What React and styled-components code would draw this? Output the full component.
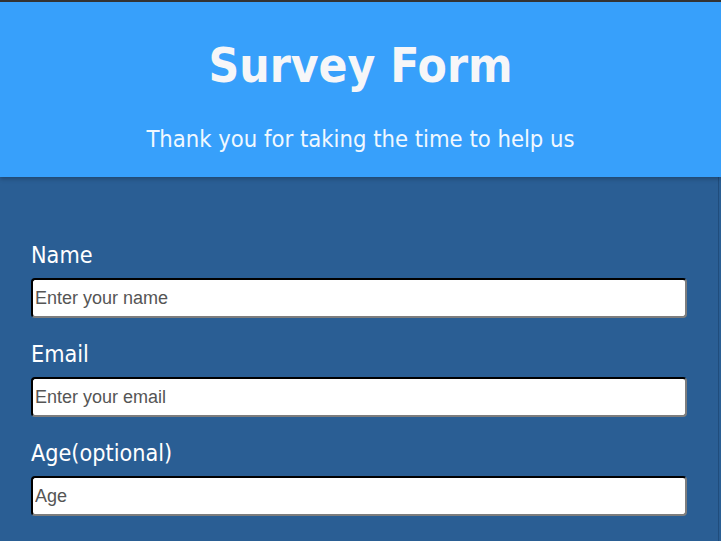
import React from "react";
import styled, { createGlobalStyle } from "styled-components";

const Global = createGlobalStyle`
  html, body { margin: 0; padding: 0; }
  body {
    background: #2a5e94;
    border-top: 2px solid #333;
    font-family: "DejaVu Sans Condensed", "DejaVu Sans", sans-serif;
    overflow: hidden;
  }
`;

const Header = styled.header`
  background: #37a0fb;
  height: 175px;
  box-sizing: border-box;
  padding-top: 33px;
  text-align: center;
  position: relative;
  z-index: 1;
  box-shadow: 0 2px 4px rgba(0, 0, 0, 0.25);
`;

const Title = styled.h1`
  margin: 0;
  font-size: 47.5px;
  font-weight: bold;
  color: #f6f6f8;
  line-height: 62px;
`;

const Subtitle = styled.p`
  margin: 27px 0 0;
  font-size: 23.6px;
  color: #f0f8ff;
  line-height: 30px;
`;

const Form = styled.form`
  box-sizing: border-box;
  width: 719px;
  border-right: 1px solid #1f4c7c;
  padding: 65px 31px 40px 31px;
  display: flex;
  flex-direction: column;
  min-height: 400px;
`;

const Field = styled.div`
  display: flex;
  flex-direction: column;
  gap: 10px;
  margin-bottom: 23px;
`;

const Label = styled.label`
  color: #ffffff;
  font-size: 23.2px;
  line-height: 26px;
`;

const Input = styled.input`
  box-sizing: border-box;
  width: 100%;
  height: 40px;
  border: 2px inset #767676;
  border-top-color: #1b1b1b;
  border-left-color: #1b1b1b;
  border-bottom-color: #7d7d7d;
  border-right-color: #7d7d7d;
  border-radius: 4px;
  padding: 0 2px;
  background: #fff;
  font-family: "Liberation Sans", Arial, sans-serif;
  font-size: 18px;
  color: #333;
  &::placeholder { color: #555; }
`;

const fields = [
  { id: "name", label: "Name", placeholder: "Enter your name", type: "text" },
  { id: "email", label: "Email", placeholder: "Enter your email", type: "email" },
  { id: "age", label: "Age(optional)", placeholder: "Age", type: "number" },
];

export default function App() {
  return (
    <>
      <Global />
      <Header>
        <Title>Survey Form</Title>
        <Subtitle>Thank you for taking the time to help us</Subtitle>
      </Header>
      <Form>
        {fields.map((f) => (
          <Field key={f.id}>
            <Label htmlFor={f.id}>{f.label}</Label>
            <Input id={f.id} type={f.type} placeholder={f.placeholder} />
          </Field>
        ))}
        <Field>
          <Label htmlFor="role">Which option best describes your current role?</Label>
        </Field>
      </Form>
    </>
  );
}
